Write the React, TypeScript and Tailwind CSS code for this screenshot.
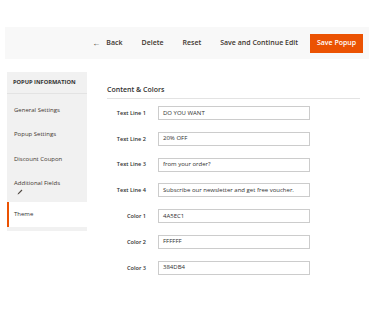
import React from "react";

const fields: { label: string; value: string }[] = [
  { label: "Text Line 1", value: "DO YOU WANT" },
  { label: "Text Line 2", value: "20% OFF" },
  { label: "Text Line 3", value: "from your order?" },
  { label: "Text Line 4", value: "Subscribe our newsletter and get free voucher." },
  { label: "Color 1", value: "4A5EC1" },
  { label: "Color 2", value: "FFFFFF" },
  { label: "Color 3", value: "384DB4" },
];

const menu = ["General Settings", "Popup Settings", "Discount Coupon"];

export default function App(): React.ReactNode {
  return (
    <div className="h-[328px] w-[374px] overflow-hidden bg-white font-['Open_Sans',sans-serif] text-[#303030]">
      {/* action bar */}
      <div className="px-[5px] pt-[27px]">
        <div className="flex h-[32px] items-center justify-end bg-[#f8f8f8] pr-[6px] text-[7px] font-semibold text-[#41362f]">
          <div className="flex items-center gap-[19px]">
            <span className="flex items-center gap-[6px]">
              <span className="text-[8px] leading-none">←</span>
              <span>Back</span>
            </span>
            <span>Delete</span>
            <span>Reset</span>
            <span>Save and Continue Edit</span>
          </div>
          <button className="ml-[12px] flex h-[19px] w-[53px] items-center justify-center bg-[#eb5202] text-white">
            Save Popup
          </button>
        </div>
      </div>

      <div className="mt-[13px] flex items-start">
        {/* sidebar */}
        <div className="ml-[7px] w-[80px] bg-[#f1f1f1]">
          <div className="flex h-[22px] items-center border-b border-[#e3e3e3] pl-[6px] text-[5.7px] font-bold text-[#303030]">
            POPUP INFORMATION
          </div>
          <div className="pt-[4px] text-[6px] text-[#41362f]">
            {menu.map((m) => (
              <div key={m} className="flex h-[24.5px] items-center pl-[7px]">
                {m}
              </div>
            ))}
            <div className="flex h-[30px] flex-col justify-start pl-[7px] pt-[7px]">
              <span>Additional Fields</span>
              <svg width="6" height="6" viewBox="0 0 6 6" className="ml-[3px] mt-[1px]">
                <path d="M0.6 5.4 L1 4.2 L4.6 0.6 L5.4 1.4 L1.8 5 Z" fill="#514943" />
              </svg>
            </div>
            <div className="flex h-[25px] items-center border-l-2 border-[#eb5202] bg-white pl-[5px] text-[#303030]">
              Theme
            </div>
            <div className="h-[4px] bg-[#f1f1f1]" />
          </div>
        </div>

        {/* content */}
        <div className="ml-[20px] w-[253px]">
          <div className="flex h-[27px] items-end border-b border-[#e3e3e3] pb-[3px] text-[7px] font-semibold text-[#303030]">
            Content &amp; Colors
          </div>
          <div className="mt-[7px] flex flex-col gap-[11.8px]">
            {fields.map((f) => (
              <div key={f.label} className="flex h-[14px] items-center">
                <div className="w-[39px] text-right text-[5.6px] font-semibold text-[#303030]">
                  {f.label}
                </div>
                <div className="ml-[12px] flex h-[14px] w-[152px] items-center border border-[#cccccc] bg-white pl-[4px] text-[6px] text-[#303030]">
                  {f.value}
                </div>
              </div>
            ))}
          </div>
        </div>
      </div>
    </div>
  );
}
